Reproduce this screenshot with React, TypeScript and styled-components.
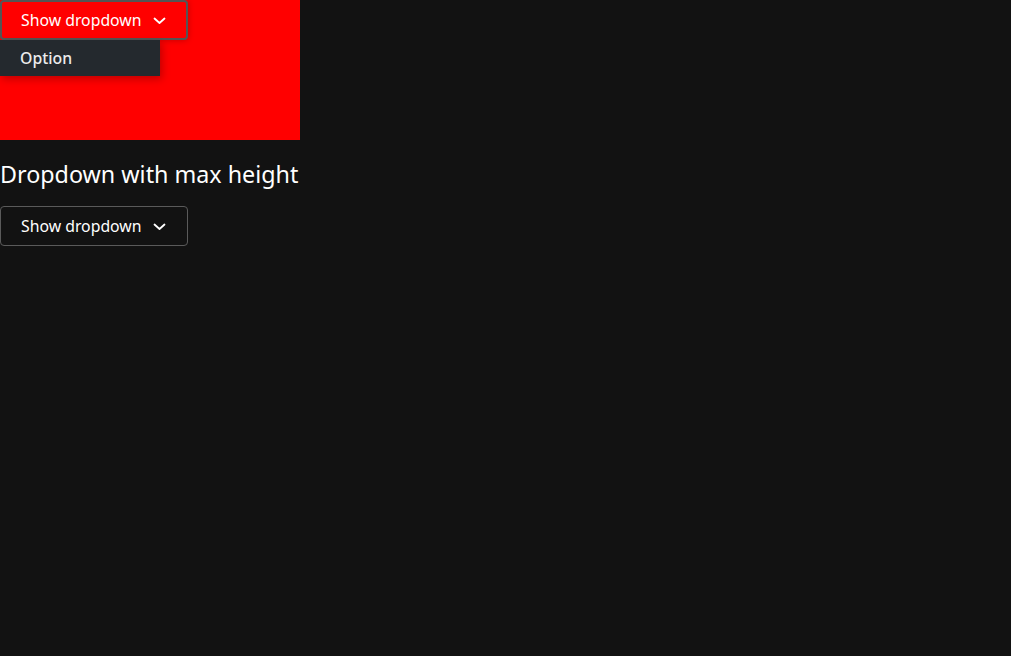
import React from 'react'
import styled, { createGlobalStyle, css } from 'styled-components'

const GlobalStyle = createGlobalStyle`
  html, body {
    margin: 0;
    padding: 0;
    background: #121212;
    color: #ffffff;
    font-family: 'Noto Sans', 'Open Sans', sans-serif;
  }
`

const Page = styled.main`
  display: flex;
  flex-direction: column;
  align-items: flex-start;
`

const Stage = styled.div`
  position: relative;
  width: 300px;
  height: 140px;
  background: #ff0000;
`

const Heading = styled.h2`
  margin: 19px 0 17px;
  font-size: 23.3px;
  font-weight: 400;
  line-height: 30px;
  color: #ffffff;
`

type ToggleProps = {
  focused?: boolean
}

const Toggle = styled.button<ToggleProps>`
  display: flex;
  align-items: center;
  gap: 10px;
  box-sizing: border-box;
  height: 40px;
  padding: 0 20px 0 20px;
  background: transparent;
  color: #ffffff;
  font-family: 'Noto Sans', 'Open Sans', sans-serif;
  font-size: 15.8px;
  border: 1px solid #5a5a5a;
  border-radius: 4px;
  cursor: pointer;

  ${({ focused }) =>
    focused &&
    css`
      border: 2px solid #555555;
      padding: 0 19px;
      box-shadow: 0 0 6px rgba(0, 0, 0, 0.25);
    `}

  > svg {
    width: 15px;
    height: 15px;
  }
`

const Menu = styled.ul`
  position: absolute;
  top: 40px;
  left: 0;
  width: 160px;
  height: 36px;
  margin: 0;
  padding: 0;
  list-style: none;
  background: #24292e;
  box-shadow: 2px 3px 8px rgba(0, 0, 0, 0.25);
`

const Item = styled.li`
  display: flex;
  align-items: center;
  height: 36px;
  padding: 0 20px;
  font-size: 15.8px;
  font-weight: 500;
  color: #ececec;
`

const Chevron = () => (
  <svg viewBox="0 0 15 15" fill="none" stroke="currentColor" strokeWidth="1.8" strokeLinecap="round" strokeLinejoin="round">
    <path d="M2.5 5.5 7.5 10l5-4.5" />
  </svg>
)

export default function App() {
  return (
    <>
      <GlobalStyle />
      <Page>
        <Stage>
          <Toggle focused>
            Show dropdown
            <Chevron />
          </Toggle>
          <Menu>
            <Item>Option</Item>
          </Menu>
        </Stage>
        <Heading>Dropdown with max height</Heading>
        <Toggle>
          Show dropdown
          <Chevron />
        </Toggle>
      </Page>
    </>
  )
}
